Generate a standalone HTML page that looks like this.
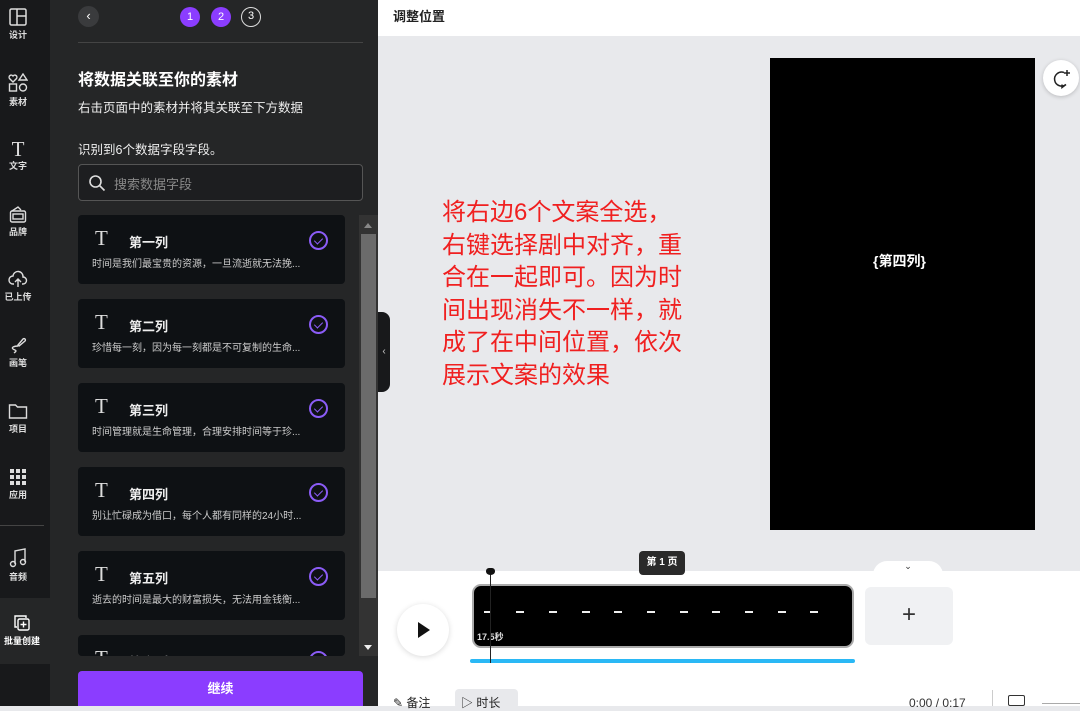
<!DOCTYPE html>
<html><head><meta charset="utf-8"><style>
*{margin:0;padding:0;box-sizing:border-box}
body{width:1080px;height:706px;overflow:hidden;position:relative;font-family:"Liberation Sans","Noto Sans CJK SC",sans-serif;background:#e8e9ec}
.abs{position:absolute}
.side{left:0;top:0;width:50px;height:706px;background:#18191b}
.si{position:absolute;left:0;width:36px;text-align:center;color:#ddd;font-size:9px;font-weight:bold}
.si svg{display:block;margin:0 auto 2px}
.panel{left:50px;top:0;width:328px;height:706px;background:#252627}
.card{position:absolute;left:78px;width:267px;height:69px;background:#0e1114;border-radius:4px}
.card .T{position:absolute;left:17px;top:11px;font-family:"Liberation Serif",serif;font-size:21px;color:#ddd}
.card .h{position:absolute;left:51px;top:17px;color:#eee;font-size:13px;font-weight:bold}
.card .d{position:absolute;left:14px;top:40px;color:#ccc;font-size:10px;white-space:nowrap}
.card .ck{position:absolute;left:231px;top:16px;width:19px;height:19px;border:2px solid #8b5cf6;border-radius:50%}
.card .ck:after{content:"";position:absolute;left:5px;top:3px;width:4px;height:7px;border:solid #8b5cf6;border-width:0 1.5px 1.5px 0;transform:rotate(45deg)}
.step{position:absolute;top:7px;width:20px;height:20px;border-radius:50%;font-size:11px;color:#fff;text-align:center;line-height:20px}
.dash{position:absolute;top:611px;width:8px;height:2px;background:#eee}
</style></head><body>
<div class="abs side">
 <div class="si" style="top:8px"><svg width="18" height="18" viewBox="0 0 18 18" fill="none" stroke="#ddd" stroke-width="1.5"><rect x="1" y="1" width="16" height="16" rx="1.5"/><path d="M8 1v16M8 8h9"/></svg>设计</div>
 <div class="si" style="top:73px"><svg width="20" height="20" viewBox="0 0 20 20" fill="none" stroke="#ddd" stroke-width="1.4"><path d="M5 9 1.5 5.5a2 2 0 0 1 3.5-2.5 2 2 0 0 1 3.5 2.5z"/><path d="M15 1l4 6h-8z"/><rect x="1.5" y="11" width="7" height="7"/><circle cx="15" cy="14.5" r="3.5"/></svg>素材</div>
 <div class="si" style="top:139px"><div style="font-family:'Liberation Serif',serif;font-size:21px;font-weight:normal;line-height:20px">T</div>文字</div>
 <div class="si" style="top:205px"><svg width="18" height="18" viewBox="0 0 18 18" fill="none" stroke="#ddd" stroke-width="1.4"><path d="M3 6l6-4 3 3"/><rect x="1.5" y="6" width="15" height="11" rx="1.5"/><rect x="4" y="9" width="10" height="5"/></svg>品牌</div>
 <div class="si" style="top:270px"><svg width="20" height="18" viewBox="0 0 20 18" fill="none" stroke="#ddd" stroke-width="1.4"><path d="M6 14H5a4 4 0 0 1 0-8 5 5 0 0 1 10 1 3.5 3.5 0 0 1 0 7h-1M10 17V9M7 12l3-3 3 3"/></svg>已上传</div>
 <div class="si" style="top:336px"><svg width="18" height="18" viewBox="0 0 18 18" fill="none" stroke="#ddd" stroke-width="1.4"><path d="M9 9l5-6a1.4 1.4 0 0 1 2 2l-6 5zM9 10c-4 0-7 1.5-5 3s5 1 1 4"/></svg>画笔</div>
 <div class="si" style="top:402px"><svg width="20" height="18" viewBox="0 0 20 18" fill="none" stroke="#ddd" stroke-width="1.4"><path d="M1.5 3h6l2 2h9v11h-17z"/></svg>项目</div>
 <div class="si" style="top:468px"><svg width="18" height="18" viewBox="0 0 18 18" fill="#ddd"><rect x="1" y="1" width="4" height="4"/><rect x="7" y="1" width="4" height="4"/><rect x="13" y="1" width="4" height="4"/><rect x="1" y="7" width="4" height="4"/><rect x="7" y="7" width="4" height="4"/><rect x="13" y="7" width="4" height="4"/><rect x="1" y="13" width="4" height="4"/><rect x="7" y="13" width="4" height="4"/><rect x="13" y="13" width="4" height="4"/></svg>应用</div>
 <div class="abs" style="left:0;top:525px;width:44px;height:1px;background:#444"></div>
 <div class="si" style="top:548px"><svg width="18" height="20" viewBox="0 0 18 20" fill="none" stroke="#ddd" stroke-width="1.4"><path d="M6 16V3l10-2v13"/><circle cx="4" cy="16" r="2.5"/><circle cx="14" cy="14" r="2.5"/></svg>音频</div>
 <div class="abs" style="left:0;top:598px;width:50px;height:66px;background:#252627"></div>
 <div class="si" style="top:614px;width:44px;color:#fff"><svg width="18" height="18" viewBox="0 0 18 18" fill="none" stroke="#fff" stroke-width="1.4"><path d="M4 13H2V2h11v2"/><rect x="5" y="5" width="11" height="11" rx="1.5"/><path d="M10.5 7.5v6M7.5 10.5h6"/></svg>批量创建</div>
</div>
<div class="abs panel"></div>
<div class="abs" style="left:78px;top:6px;width:21px;height:21px;border-radius:50%;background:#3a3b3d;color:#fff;font-size:13px;text-align:center;line-height:20px">‹</div>
<div class="step" style="left:180px;background:#8b3dff">1</div>
<div class="step" style="left:211px;background:#8b3dff">2</div>
<div class="step" style="left:241px;border:1.5px solid #ddd;line-height:17px">3</div>
<div class="abs" style="left:78px;top:42px;width:285px;height:1px;background:#444"></div>
<div class="abs" style="left:78px;top:66px;color:#fff;font-size:16px;font-weight:bold">将数据关联至你的素材</div>
<div class="abs" style="left:78px;top:97px;color:#eee;font-size:12.5px">右击页面中的素材并将其关联至下方数据</div>
<div class="abs" style="left:78px;top:139px;color:#eee;font-size:12.5px">识别到6个数据字段字段。</div>
<div class="abs" style="left:78px;top:164px;width:285px;height:37px;border:1px solid #555;border-radius:4px;background:#1d1e20">
 <svg class="abs" style="left:9px;top:9px" width="18" height="18" viewBox="0 0 18 18" fill="none" stroke="#ddd" stroke-width="1.6"><circle cx="7.5" cy="7.5" r="5.5"/><path d="M11.5 11.5l5 5"/></svg>
 <div class="abs" style="left:35px;top:9px;color:#888;font-size:13px">搜索数据字段</div>
</div>
<div class="card" style="top:215px"><div class="T">T</div><div class="h">第一列</div><div class="d">时间是我们最宝贵的资源，一旦流逝就无法挽...</div><div class="ck"></div></div>
<div class="card" style="top:299px"><div class="T">T</div><div class="h">第二列</div><div class="d">珍惜每一刻，因为每一刻都是不可复制的生命...</div><div class="ck"></div></div>
<div class="card" style="top:383px"><div class="T">T</div><div class="h">第三列</div><div class="d">时间管理就是生命管理，合理安排时间等于珍...</div><div class="ck"></div></div>
<div class="card" style="top:467px"><div class="T">T</div><div class="h">第四列</div><div class="d">别让忙碌成为借口，每个人都有同样的24小时...</div><div class="ck"></div></div>
<div class="card" style="top:551px"><div class="T">T</div><div class="h">第五列</div><div class="d">逝去的时间是最大的财富损失，无法用金钱衡...</div><div class="ck"></div></div>
<div class="card" style="top:635px;height:21px;overflow:hidden"><div class="T">T</div><div class="h">第六列</div><div class="ck"></div></div>
<div class="abs" style="left:359px;top:215px;width:19px;height:441px;background:#333"></div>
<div class="abs" style="left:361px;top:234px;width:15px;height:364px;background:#6b6b6b"></div>
<div class="abs" style="left:364px;top:223px;border:4px solid transparent;border-bottom:5px solid #888;border-top:0"></div>
<div class="abs" style="left:364px;top:645px;border:4px solid transparent;border-top:5px solid #eee;border-bottom:0"></div>
<div class="abs" style="left:78px;top:671px;width:285px;height:35px;background:#8b3dff;border-radius:4px 4px 0 0;color:#fff;font-weight:bold;font-size:13px;text-align:center;line-height:36px">继续</div>
<!-- main -->
<div class="abs" style="left:378px;top:0;width:702px;height:36px;background:#fff"></div>
<div class="abs" style="left:393px;top:6px;font-size:13px;font-weight:bold;color:#222">调整位置</div>
<div class="abs" style="left:378px;top:312px;width:12px;height:80px;background:#18191b;border-radius:0 8px 8px 0;color:#ccc;font-size:10px;line-height:80px;text-align:center">‹</div>
<div class="abs" style="left:770px;top:58px;width:265px;height:472px;background:#000"></div>
<div class="abs" style="left:873px;top:251px;color:#fff;font-size:14px;font-weight:bold">{第四列}</div>
<div class="abs" style="left:1043px;top:60px;width:36px;height:36px;border-radius:50%;background:#fff;box-shadow:0 1px 4px rgba(0,0,0,.2)"><svg class="abs" style="left:9px;top:9px" width="20" height="20" viewBox="0 0 20 20" fill="none" stroke="#222" stroke-width="1.5"><path d="M12 3.5a7 7 0 1 0 2 12l-4 3v-3"/><path d="M15 1v6M12 4h6"/></svg></div>
<div class="abs" style="left:442px;top:197px;color:#f02020;font-size:24px;line-height:32.6px;white-space:nowrap">将右边6个文案全选，<br>右键选择剧中对齐，重<br>合在一起即可。因为时<br>间出现消失不一样，就<br>成了在中间位置，依次<br>展示文案的效果</div>
<!-- timeline -->
<div class="abs" style="left:378px;top:571px;width:702px;height:135px;background:#fff"></div>
<div class="abs" style="left:873px;top:561px;width:70px;height:14px;background:#fff;border-radius:14px 14px 0 0;text-align:center;font-size:9px;color:#333">⌄</div>
<div class="abs" style="left:639px;top:551px;width:46px;height:24px;background:#2a2a2a;border-radius:4px;color:#fff;font-size:10px;font-weight:bold;text-align:center;line-height:24px">第 1 页</div>
<div class="abs" style="left:397px;top:604px;width:52px;height:52px;border-radius:50%;background:#fff;box-shadow:0 1px 6px rgba(0,0,0,.15)"><div class="abs" style="left:21px;top:18px;border-left:12px solid #111;border-top:8px solid transparent;border-bottom:8px solid transparent"></div></div>
<div class="abs" style="left:472px;top:584px;width:382px;height:64px;border:2px solid #aaa;border-radius:9px;background:#000;padding:2px"></div>
<div class="dash" style="left:484px;width:6px"></div><div class="dash" style="left:516px"></div><div class="dash" style="left:549px"></div><div class="dash" style="left:582px"></div><div class="dash" style="left:614px"></div><div class="dash" style="left:647px"></div><div class="dash" style="left:680px"></div><div class="dash" style="left:712px"></div><div class="dash" style="left:745px"></div><div class="dash" style="left:778px"></div><div class="dash" style="left:810px"></div>
<div class="abs" style="left:477px;top:630px;color:#ddd;font-size:9px;font-weight:bold">17.5秒</div>
<div class="abs" style="left:470px;top:659px;width:385px;height:4px;background:#2ab8f5;border-radius:2px"></div>
<div class="abs" style="left:490px;top:572px;width:1px;height:91px;background:#222"></div>
<div class="abs" style="left:486px;top:568px;width:9px;height:7px;background:#111;border-radius:3px 3px 50% 50%"></div>
<div class="abs" style="left:865px;top:587px;width:88px;height:58px;background:#f0f1f3;border-radius:6px;font-size:24px;text-align:center;line-height:56px;color:#333;font-weight:300">+</div>
<div class="abs" style="left:393px;top:694px;font-size:12px;color:#222">✎ 备注</div>
<div class="abs" style="left:455px;top:689px;width:63px;height:20px;background:#e8e9ec;border-radius:4px;font-size:12px;color:#222;padding:5px 0 0 6px">▷ 时长</div>
<div class="abs" style="left:909px;top:696px;font-size:12px;color:#333">0:00 / 0:17</div>
<div class="abs" style="left:992px;top:690px;width:1px;height:16px;background:#ccc"></div>
<div class="abs" style="left:1008px;top:695px;width:17px;height:11px;border:1.5px solid #333;border-radius:2px"></div>
<div class="abs" style="left:1042px;top:703px;width:38px;height:1px;background:#aaa"></div>
</body></html>
